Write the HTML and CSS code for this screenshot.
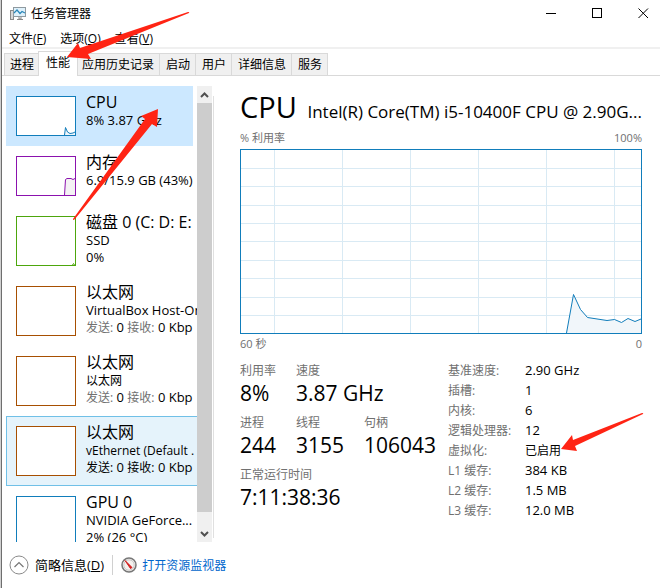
FILE: index.html
```
<!DOCTYPE html>
<html lang="zh-CN">
<head>
  <meta charset="UTF-8" />
  <meta name="viewport" content="width=device-width, initial-scale=1.0"/>
  <title>任务管理器</title>
  <link rel="stylesheet" href="styles.css">
</head>
<body>
  <div class="window">
    <header class="titlebar">
      <svg class="app-icon" width="16" height="14" viewBox="0 0 16 14">
        <rect x="0.5" y="3.5" width="3" height="9" fill="#d8d8d8" stroke="#8a8a8a"/>
        <rect x="3.5" y="0.5" width="12" height="9" fill="#dff1fb" stroke="#8f9aa0"/>
        <path d="M4 6L7 3L10 6.500L12 4.500L15 6" fill="none" stroke="#2a86b8" stroke-width="1.200"/>
        <path d="M7 12.500H13M9 10V12H11V10" fill="none" stroke="#8a8a8a"/>
      </svg>
      <h1>任务管理器</h1>
      <div class="window-buttons">
        <button aria-label="最小化"><svg width="11" height="11"><path d="M0 5.500H10" stroke="#000"/></svg></button>
        <button aria-label="最大化"><svg width="11" height="11"><rect x="0.5" y="0.5" width="9" height="9" fill="none" stroke="#000"/></svg></button>
        <button aria-label="关闭"><svg width="11" height="11"><path d="M0.500 0.500L10 10M10 0.500L0.500 10" stroke="#000"/></svg></button>
      </div>
    </header>

    <nav class="menu">
      <button>文件(<u>F</u>)</button>
      <button>选项(<u>O</u>)</button>
      <button>查看(<u>V</u>)</button>
    </nav>

    <div class="tabs" role="tablist">
      <button role="tab">进程</button>
      <button role="tab" class="active" aria-selected="true">性能</button>
      <button role="tab">应用历史记录</button>
      <button role="tab">启动</button>
      <button role="tab">用户</button>
      <button role="tab">详细信息</button>
      <button role="tab">服务</button>
    </div>

    <div class="content">
      <aside class="sidebar">
        <ul class="devices">
          <li class="device selected">
            <svg class="thumb cpu" width="60" height="40" viewBox="1 1 58 38">
              <path d="M48.500 39L49.500 31.500L51.500 36L54 37.500L57 37L59 36V39Z" fill="#f1f6fa"/>
              <path d="M48.500 39L49.500 31.500L51.500 36L54 37.500L57 37L59 36" fill="none" stroke="#117dbb"/>
            </svg>
            <div class="info">
              <h2>CPU</h2>
              <p>8% 3.87 GHz</p>
            </div>
          </li>
          <li class="device">
            <svg class="thumb memory" width="60" height="40" viewBox="1 1 58 38">
              <path d="M48.500 39L49.500 23.500L51 22.500H55L57 23.500L59 22.500V39Z" fill="#f4f2f4"/>
              <path d="M48.500 39L49.500 23.500L51 22.500H55L57 23.500L59 22.500" fill="none" stroke="#8b12ae"/>
            </svg>
            <div class="info">
              <h2>内存</h2>
              <p>6.9/15.9 GB (43%)</p>
            </div>
          </li>
          <li class="device">
            <svg class="thumb disk" width="60" height="50" viewBox="1 1 58 48">
              <path d="M56.500 49L57.500 47.500L58.500 49" fill="none" stroke="#4da60c"/>
            </svg>
            <div class="info">
              <h2>磁盘 0 (C: D: E:</h2>
              <p>SSD</p>
              <p>0%</p>
            </div>
          </li>
          <li class="device">
            <svg class="thumb network" width="60" height="50"></svg>
            <div class="info">
              <h2>以太网</h2>
              <p>VirtualBox Host-On</p>
              <p><span class="small muted">发送:</span> 0 <span class="small muted">接收:</span> 0 Kbp</p>
            </div>
          </li>
          <li class="device">
            <svg class="thumb network" width="60" height="50"></svg>
            <div class="info">
              <h2>以太网</h2>
              <p class="small">以太网</p>
              <p><span class="small muted">发送:</span> 0 <span class="small muted">接收:</span> 0 Kbp</p>
            </div>
          </li>
          <li class="device hover">
            <svg class="thumb network" width="60" height="50"></svg>
            <div class="info">
              <h2>以太网</h2>
              <p class="small">vEthernet (Default .</p>
              <p><span class="small">发送:</span> 0 <span class="small">接收:</span> 0 Kbp</p>
            </div>
          </li>
          <li class="device">
            <svg class="thumb cpu" width="60" height="50"></svg>
            <div class="info">
              <h2>GPU 0</h2>
              <p>NVIDIA GeForce...</p>
              <p>2% (26 °C)</p>
            </div>
          </li>
        </ul>
        <div class="scrollbar">
          <button aria-label="向上"><svg width="9" height="6"><path d="M1 5L4.500 1.500L8 5" fill="none" stroke="#505050" stroke-width="2"/></svg></button>
          <div class="track"><div class="handle"></div></div>
          <button aria-label="向下"><svg width="9" height="6"><path d="M1 1L4.500 4.500L8 1" fill="none" stroke="#505050" stroke-width="2"/></svg></button>
        </div>
        <div class="splitter"></div>
      </aside>

      <main class="details">
        <div class="heading">
          <h2>CPU</h2>
          <p>Intel(R) Core(TM) i5-10400F CPU @ 2.90G...</p>
        </div>
        <div class="axis"><span>% 利用率</span><span>100%</span></div>
        <svg class="chart" viewBox="0 0 400 183" preserveAspectRatio="none">
          <path class="grid" d="M33.500 0V183M101.500 0V183M169.500 0V183M237.500 0V183M305.500 0V183M373.500 0V183M0 18.500H400M0 36.500H400M0 55.500H400M0 73.500H400M0 91.500H400M0 110.500H400M0 128.500H400M0 147.500H400M0 165.500H400"/>
          <path class="area" d="M325.500 183L332.500 144.500L339.500 159.500L346.500 167.500L366 170.500L373.500 169.500L380.500 172.500L387 168.500L394 171.500L400 169V183Z"/>
          <path class="line" d="M325.500 183L332.500 144.500L339.500 159.500L346.500 167.500L366 170.500L373.500 169.500L380.500 172.500L387 168.500L394 171.500L400 169"/>
        </svg>
        <div class="axis time"><span>60 秒</span><span>0</span></div>

        <div class="numbers">
          <dl class="stats">
            <div><dt>利用率</dt><dd>8%</dd></div>
            <div class="wide"><dt>速度</dt><dd>3.87 GHz</dd></div>
            <div><dt>进程</dt><dd>244</dd></div>
            <div><dt>线程</dt><dd>3155</dd></div>
            <div><dt>句柄</dt><dd>106043</dd></div>
            <div class="full"><dt>正常运行时间</dt><dd>7:11:38:36</dd></div>
          </dl>
          <dl class="specs">
            <dt>基准速度:</dt><dd>2.90 GHz</dd>
            <dt>插槽:</dt><dd>1</dd>
            <dt>内核:</dt><dd>6</dd>
            <dt>逻辑处理器:</dt><dd>12</dd>
            <dt>虚拟化:</dt><dd class="small">已启用</dd>
            <dt>L1 缓存:</dt><dd>384 KB</dd>
            <dt>L2 缓存:</dt><dd>1.5 MB</dd>
            <dt>L3 缓存:</dt><dd>12.0 MB</dd>
          </dl>
        </div>
      </main>
    </div>

    <footer class="footer">
      <button class="fewer">
        <svg width="20" height="20" viewBox="0 0 20 20">
          <circle cx="10" cy="10" r="9" fill="#fff" stroke="#8a8a8a"/>
          <path d="M5.500 12L10 7.500L14.500 12" fill="none" stroke="#777" stroke-width="1.200"/>
        </svg>
        <span>简略信息(<u>D</u>)</span>
      </button>
      <a class="monitor" href="#">
        <svg width="16" height="16" viewBox="0 0 16 16">
          <circle cx="8" cy="8" r="7" fill="#f4f1ee" stroke="#777" stroke-width="1.500"/>
          <circle cx="8" cy="8" r="5.200" fill="none" stroke="#c9c9c9"/>
          <path d="M4 3.500L11 10.500L9.500 11.500Z" fill="#d21c1c" stroke="#d21c1c"/>
        </svg>
        <span>打开资源监视器</span>
      </a>
    </footer>

    <!-- red pointer arrows -->
    <svg class="arrows" width="660" height="588" viewBox="0 0 660 588">
      <path d="M67 57L78 43L80 48L188 12Q190 12 189 13L88 54L91 59Z"/>
      <path d="M158 109L157 127L152 124L75 219Q73 221 73 219L145 119L141 116Z"/>
      <path d="M561 449L572 435L573 440L642 413Q644 413 643 414L575 446L577 451Z"/>
    </svg>
  </div>
</body>
</html>
```

FILE: styles.css
```
* {
  box-sizing: border-box;
}

body {
  margin: 0;
  font-family: "Open Sans", "Noto Sans CJK SC", sans-serif;
  font-size: 12px;
  line-height: 17px;
  color: #000;
  background: #fff;
}

h1, h2, p, ul, dl, dd {
  margin: 0;
  padding: 0;
  font-size: 12px;
  font-weight: 400;
}

button {
  padding: 0;
  border: none;
  background: none;
  font: inherit;
  color: inherit;
}

svg {
  display: block;
  flex-shrink: 0;
}

.window {
  position: relative;
  display: flex;
  flex-direction: column;
  height: 100vh;
  overflow: hidden;
  border-left: 1px solid #d0d0d0;
  box-shadow: inset 1px 0 #6e6e6e;
}

.titlebar {
  display: flex;
  align-items: center;
  gap: 5px;
  height: 27px;
  padding-left: 9px;
}

.window-buttons {
  display: flex;
  margin-left: auto;
  margin-right: -6px;
}

.window-buttons button {
  display: flex;
  align-items: center;
  justify-content: center;
  width: 46px;
  height: 27px;
}

.menu {
  display: flex;
  gap: 14px;
  height: 22px;
  margin-left: 1px;
  padding: 2px 7px 0;
  border-bottom: 2px solid #f0f0f0;
}

.tabs {
  display: flex;
  align-items: flex-end;
  height: 27px;
  margin-left: 1px;
  padding-left: 2px;
  border-bottom: 1px solid #d9d9d9;
}

.tabs button {
  height: 22px;
  padding: 0 5px 0 6px;
  border: 1px solid #d9d9d9;
  border-bottom: none;
  border-left-width: 0;
  background: #f0f0f0;
}

.tabs button:first-child {
  padding-left: 5px;
  border-left-width: 1px;
}

.tabs .active {
  height: 25px;
  margin: 0 -2px -1px;
  padding: 0 7px 3px;
  border-left-width: 1px;
  background: #fff;
  z-index: 1;
}

.content {
  display: flex;
  flex: 1;
  min-height: 0;
  padding-top: 10px;
}

.sidebar {
  display: flex;
  flex-shrink: 0;
  width: 213px;
  padding-left: 5px;
}

.devices {
  flex: 1;
  overflow: hidden;
  list-style: none;
}

.device {
  display: flex;
  gap: 10px;
  width: 200px;
  padding: 6px 10px 10px;
  white-space: nowrap;
}

.selected {
  width: 187px;
  background: #cce8ff;
}

.hover {
  padding: 5px 9px 9px;
  border: 1px solid #70c0e7;
  background: #e5f3fb;
}

.thumb {
  margin-top: 4px;
  border: 1px solid;
  background: #fff;
}

.cpu {
  border-color: #117dbb;
}

.memory {
  border-color: #8b12ae;
}

.disk {
  border-color: #4da60c;
}

.network {
  border-color: #a74f01;
}

.info {
  height: 44px;
}

.info h2 {
  font-size: 16px;
  line-height: 20px;
}

.info p {
  height: 17px;
  font-size: 13px;
}

.info .small {
  font-size: 12px;
}

.muted {
  color: #707070;
}

.scrollbar {
  display: flex;
  flex-direction: column;
  width: 15px;
  background: #f0f0f0;
}

.scrollbar button {
  display: flex;
  align-items: center;
  justify-content: center;
  height: 17px;
}

.track {
  flex: 1;
}

.handle {
  height: 97%;
  background: #cdcdcd;
}

.splitter {
  width: 1px;
  margin: 10px 0 4px 1px;
  background: #e0e0e0;
}

.details {
  flex: 1;
  min-width: 0;
  padding: 0 18px 0 26px;
}

.heading {
  display: flex;
  align-items: baseline;
  justify-content: space-between;
  height: 43px;
  white-space: nowrap;
}

.heading h2 {
  font-size: 29px;
  line-height: 42px;
}

.heading p {
  font-size: 17px;
}

.axis {
  display: flex;
  justify-content: space-between;
  height: 20px;
  font-size: 11px;
  line-height: 18px;
  color: #707070;
}

.time {
  line-height: 20px;
}

.chart {
  width: 100%;
  height: 185px;
  border: 1px solid #117dbb;
}

.chart path {
  fill: none;
  vector-effect: non-scaling-stroke;
}

.chart .grid {
  stroke: #d9eaf4;
}

.chart .area {
  fill: #f1f6fa;
}

.chart .line {
  stroke: #117dbb;
}

.numbers {
  display: flex;
  gap: 12px;
  padding-top: 8px;
}

.stats {
  display: grid;
  grid-template-columns: 56px 68px 72px;
  grid-auto-rows: 52px;
  white-space: nowrap;
}

.stats dt {
  line-height: 18px;
  color: #707070;
}

.stats dd {
  font-size: 21px;
  line-height: 26px;
}

.wide {
  grid-column: span 2;
}

.full {
  grid-column: span 3;
}

.specs {
  display: grid;
  grid-template-columns: 77px auto;
  grid-auto-rows: 20px;
  white-space: nowrap;
}

.specs dt {
  color: #707070;
}

.specs dd {
  font-size: 13px;
}

.specs .small {
  font-size: 12px;
}

.footer {
  display: flex;
  align-items: center;
  height: 46px;
  padding-left: 8px;
}

.fewer {
  display: flex;
  align-items: center;
  gap: 6px;
  padding-right: 8px;
  border-right: 1px solid #d0d0d0;
  font-size: 13px;
}

.monitor {
  display: flex;
  align-items: center;
  gap: 5px;
  padding-left: 8px;
  color: #0066cc;
  text-decoration: none;
}

.arrows {
  position: absolute;
  top: 0;
  left: -1px;
  z-index: 2;
  fill: #ff2414;
  pointer-events: none;
}
```
